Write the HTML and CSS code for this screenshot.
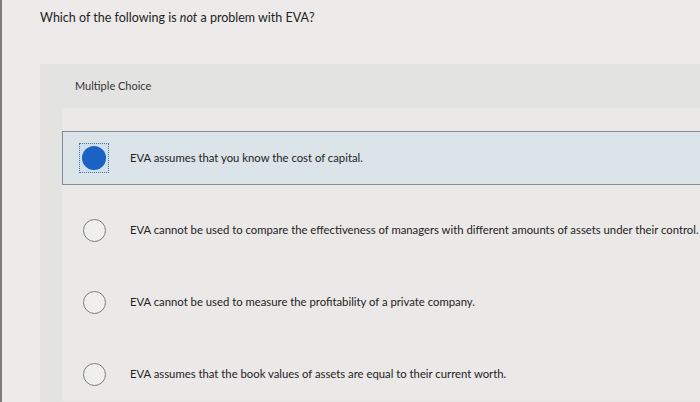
FILE: index.html
```html
<!DOCTYPE html>
<html lang="en">
<head>
<meta charset="utf-8">
<title>EVA question</title>
<link rel="stylesheet" href="styles.css">
</head>
<body>
<main class="page">
  <p class="question">Which of the following is <em>not</em> a problem with EVA?</p>
  <section class="panel">
    <h2 class="panel-title">Multiple Choice</h2>
    <div class="options">
      <label class="option option-selected">
        <span class="radio-wrap focus"><span class="radio checked"></span></span>
        <span class="option-text">EVA assumes that you know the cost of capital.</span>
      </label>
      <label class="option">
        <span class="radio-wrap"><span class="radio"></span></span>
        <span class="option-text">EVA cannot be used to compare the effectiveness of managers with different amounts of assets under their control.</span>
      </label>
      <label class="option">
        <span class="radio-wrap"><span class="radio"></span></span>
        <span class="option-text">EVA cannot be used to measure the profitability of a private company.</span>
      </label>
      <label class="option">
        <span class="radio-wrap"><span class="radio"></span></span>
        <span class="option-text">EVA assumes that the book values of assets are equal to their current worth.</span>
      </label>
    </div>
  </section>
</main>
</body>
</html>
```

FILE: styles.css
```css
html, body {
  margin: 0;
  padding: 0;
}

body {
  background: #ecebe9;
  font-family: Lato, "Liberation Sans", sans-serif;
  color: #232323;
  overflow: hidden;
}

.page {
  border-left: 2px solid #7c7c7c;
  min-height: 402px;
  box-sizing: border-box;
}

.question {
  margin: 0;
  padding: 10px 0 0 38px;
  font-size: 12.5px;
  line-height: 16px;
  height: 64px;
  box-sizing: border-box;
}

.question em {
  font-style: italic;
}

.panel {
  margin-left: 38px;
  background: #e3e3e1;
  min-height: 338px;
}

.panel-title {
  margin: 0;
  padding: 15px 0 0 35px;
  height: 44px;
  box-sizing: border-box;
  font-size: 11px;
  line-height: 14px;
  font-weight: normal;
  color: #333333;
}

.options {
  margin-left: 22px;
  background: #eae9e7;
  padding-top: 23px;
  display: flex;
  flex-direction: column;
  gap: 18px;
}

.option {
  display: flex;
  align-items: center;
  height: 54px;
  box-sizing: border-box;
  border: 1px solid transparent;
  border-right: none;
  padding-left: 16px;
  gap: 21px;
}

.option-selected {
  background: #dbe4e8;
  border-color: #868e94;
}

.radio-wrap {
  width: 30px;
  height: 30px;
  box-sizing: border-box;
  border: 1px dotted transparent;
  display: flex;
  align-items: center;
  justify-content: center;
  flex: none;
}

.radio-wrap.focus {
  border-color: #55708c;
  background: #cfe0ee;
}

.radio {
  width: 23px;
  height: 23px;
  box-sizing: border-box;
  border-radius: 50%;
  border: 1.5px solid #7a7a7a;
  background: #efefed;
}

.radio.checked {
  border: none;
  width: 24px;
  height: 24px;
  background: #1c62c4;
}

.option-text {
  font-size: 11.3px;
  line-height: 14px;
  white-space: nowrap;
}
```
